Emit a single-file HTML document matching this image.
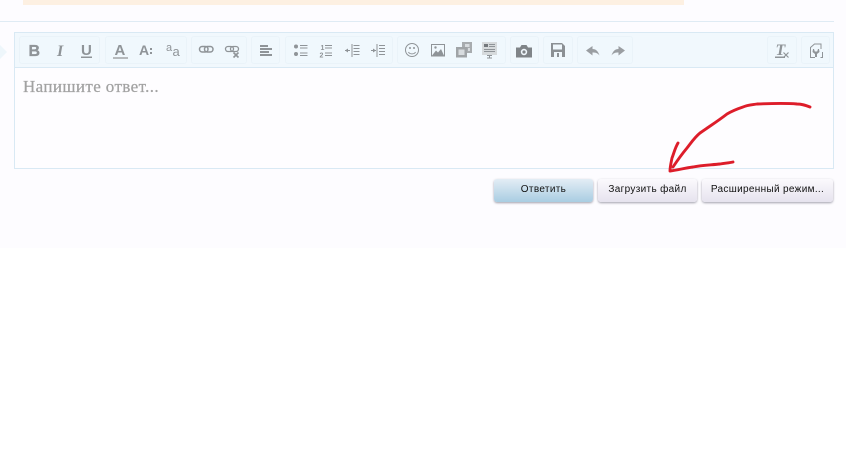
<!DOCTYPE html>
<html lang="ru"><head><meta charset="utf-8"><style>
html,body{margin:0;padding:0;background:#fff}
body{width:846px;height:460px;position:relative;overflow:hidden;font-family:"Liberation Sans",sans-serif}
div{position:absolute;box-sizing:border-box}
.g{top:36px;height:28px;background:#f0f8fd;border:1px solid #eaf3f9;border-radius:3px}
.b{top:179px;height:23px;border-radius:3px;font-size:10px;line-height:22px;text-align:center;color:#111;box-shadow:0 1px 2px rgba(70,70,90,.5);letter-spacing:.33px;background:linear-gradient(#fbfafd,#e6e3ee)}
</style></head><body>
<div style="left:0;top:0;width:846px;height:248px;background:#fdfcff"></div>
<div style="left:23px;top:0;width:661px;height:5px;background:#fdf0e2"></div>
<div style="left:0;top:21px;width:834px;height:1px;background:#dfebf4"></div>
<div style="left:0;top:45px;width:0;height:0;border:7px solid transparent;border-left-color:#eef6fb"></div>
<div style="left:14px;top:32px;width:820px;height:137px;border:1px solid #d9e9f4;background:#fefdff"></div>
<div style="left:15px;top:33px;width:818px;height:35px;background:#f1f8fd;border-bottom:1px solid #d9e9f4"></div>
<div class="g" style="left:19px;width:81px"></div>
<div class="g" style="left:105px;width:82px"></div>
<div class="g" style="left:191px;width:56px"></div>
<div class="g" style="left:251px;width:29px"></div>
<div class="g" style="left:285px;width:108px"></div>
<div class="g" style="left:397px;width:109px"></div>
<div class="g" style="left:510px;width:29px"></div>
<div class="g" style="left:543px;width:30px"></div>
<div class="g" style="left:577px;width:56px"></div>
<div class="g" style="left:767px;width:30px"></div>
<div class="g" style="left:801px;width:29px"></div>
<svg width="846" height="460" style="position:absolute;left:0;top:0" font-family="Liberation Sans">
<g fill="#8f9498">
<text x="28.500" y="56" font-size="16" font-weight="700" stroke="#8f9498" stroke-width=".3">B</text>
<text x="57" y="56" font-size="16" font-weight="700" font-style="italic" font-family="Liberation Serif">I</text>
<text x="81" y="55" font-size="15" font-weight="700">U</text>
<rect x="81" y="56.500" width="11" height="1.500"/>
<text x="114.500" y="55" font-size="15" font-weight="700">A</text>
<rect x="113" y="57" width="15" height="2" fill="#b5b9bc"/>
<text x="139" y="55" font-size="14" font-weight="700">A</text>
<rect x="150" y="48" width="2" height="2"/><rect x="150" y="52" width="2" height="2"/>
<text x="166" y="51" font-size="11">a</text>
<text x="172.500" y="56" font-size="13">a</text>
<rect x="260" y="45" width="8" height="2"/><rect x="260" y="48" width="12" height="2"/><rect x="260" y="51" width="9" height="2"/><rect x="260" y="54" width="12" height="2"/>
<circle cx="296" cy="46.500" r="2"/><circle cx="296" cy="54" r="2"/>
<rect x="300" y="45" width="7.500" height="1"/><rect x="300" y="47.500" width="7.500" height="1"/><rect x="300" y="52.500" width="7.500" height="1"/><rect x="300" y="55" width="7.500" height="1"/>
<text x="320.500" y="50" font-size="7" font-weight="700">1</text><text x="319.500" y="57.500" font-size="7" font-weight="700">2</text>
<rect x="325" y="45" width="7" height="1"/><rect x="325" y="47.500" width="7" height="1"/><rect x="325" y="52.500" width="7" height="1"/><rect x="325" y="55" width="7" height="1"/>
<rect x="351.500" y="44" width="1" height="13"/><rect x="376.500" y="44" width="1" height="13"/>
<rect x="353.500" y="45" width="6" height="1"/><rect x="353.500" y="48" width="6" height="1"/><rect x="353.500" y="51" width="6" height="1"/><rect x="353.500" y="54" width="6" height="1"/>
<rect x="379" y="45" width="6" height="1"/><rect x="379" y="48" width="6" height="1"/><rect x="379" y="51" width="6" height="1"/><rect x="379" y="54" width="6" height="1"/>
<rect x="345" y="50" width="5" height="1"/><path d="M345 50.500l3-2v4z"/>
<rect x="371" y="50" width="5" height="1"/><path d="M376 50.500l-3-2v4z"/>
<path d="M516 47.500h4l1.500-2.500h5l1.500 2.500h4v10h-16z" fill="#7f8488"/>
<circle cx="524" cy="52" r="3.200" fill="#f1f8fd"/><circle cx="524" cy="52" r="1.600" fill="#7f8488"/>
<path d="M551 43h11l3 3v11h-14z" fill="#8b9094"/>
<rect x="553" y="44.500" width="9" height="5" fill="#eff7fc"/><rect x="554" y="52" width="8" height="5" fill="#eff7fc"/><rect x="557" y="53" width="2" height="4" fill="#8b9094"/>
<path d="M586 50.500l6.500-4.500v3c3.500 0 5.500 2 7 6.500-2-2.500-3.500-3-7-3v3z" fill="#9a9ea2"/>
<path d="M625 50.500l-6.500-4.500v3c-3.500 0-5.500 2-7 6.500 2-2.500 3.500-3 7-3v3z" fill="#9a9ea2"/>
<text x="775.500" y="55" font-size="16" font-weight="700" font-style="italic" font-family="Liberation Serif">T</text>
<rect x="775" y="56.500" width="10" height="1.500"/>
<path d="M783.500 52.500l5 5M788.500 52.500l-5 5" stroke="#8f9498" stroke-width="1.200"/>
<path d="M813 49l1 0 .8 2.500h2.400l.8-2.500 1 0 .5 3-2.500 2v3h-2v-3l-2.500-2z"/>
<rect x="462" y="42" width="10" height="11" fill="#a8acaf"/><rect x="456" y="47" width="11" height="10.500" fill="#a0a4a7"/>
<rect x="458.500" y="49.500" width="6" height="5.500" fill="#d8dcdf"/><rect x="465" y="44" width="4.500" height="3" fill="#d8dcdf"/><rect x="468" y="48" width="2" height="3" fill="#d8dcdf"/>
<rect x="482" y="42" width="15" height="13" fill="#d6dadc"/>
<rect x="484" y="44" width="4" height="3" fill="#73787c"/><rect x="489" y="44" width="6" height="1"/><rect x="489" y="46" width="6" height="1"/><rect x="484" y="49" width="11" height="1"/><rect x="484" y="51" width="11" height="1"/>
<rect x="487" y="55" width="5" height="1"/><rect x="489" y="55" width="1" height="3"/><rect x="487" y="57.500" width="5" height="1"/>
</g>
<g fill="none" stroke="#8f9498">
<rect x="199.500" y="46.500" width="8.500" height="5.500" rx="2.700" stroke-width="1.500"/>
<rect x="204.500" y="46.500" width="8.500" height="5.500" rx="2.700" stroke-width="1.500"/>
<rect x="225.500" y="46.500" width="8" height="5" rx="2.500" stroke-width="1.300"/>
<rect x="230.500" y="46.500" width="8" height="5" rx="2.500" stroke-width="1.300"/>
<path d="M233.500 52.500l5 5M238.500 52.500l-5 5" stroke-width="1.600"/>
<circle cx="412" cy="50" r="6.500" stroke-width="1"/>
<path d="M408.500 52c1 2.500 6 2.500 7 0" stroke-width="1"/>
<rect x="431.500" y="44.500" width="13" height="11.500" stroke-width="1"/>
<path d="M815 57.500h-4.500v-10l4-3.500h6.500v5M822.500 52v5.500h-2" stroke-width="1"/>
</g>
<g fill="#8f9498">
<circle cx="410" cy="48" r="1"/><circle cx="414" cy="48" r="1"/>
<path d="M432 55.500l4-5 2 2 3-3.500 3 6.500z"/><circle cx="435.500" cy="47.500" r="1.200"/>
</g>
<g fill="none" stroke="#dd1d2a" stroke-width="2.900" stroke-linecap="round" stroke-linejoin="round">
<path d="M810 107C805 105 802 104 797 104C785 103 770 103.500 757 104C750 105 747 105 743 107C737 109 732 111 727 114C718 121 710 126 700 133C694 138 691 143 687 148C682 154 677 161 673 167"/>
<path d="M678 143C675 148 674 153 672 158C671 163 670 167 670 171C678 170 685 168 693 167C702 165 711 165 720 164C725 163 729 163 733 162"/>
</g>
</svg>
<div style="left:23px;top:77px;font:17px/20px 'Liberation Serif','DejaVu Serif',serif;color:#a2a2a2;letter-spacing:.4px;-webkit-text-stroke:.25px #a2a2a2">Напишите ответ...</div>
<div class="b" style="left:494px;width:99px;background:linear-gradient(#e3edf5,#a9cde2)">Ответить</div>
<div class="b" style="left:598px;width:99px">Загрузить файл</div>
<div class="b" style="left:702px;width:131px">Расширенный режим...</div>
</body></html>
